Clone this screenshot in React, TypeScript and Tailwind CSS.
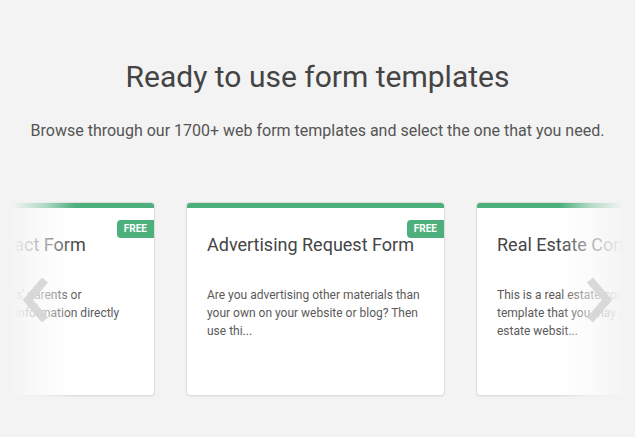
import React from "react";

const templates = [
  {
    title: "School Contact Form",
    text: "Allow your students' parents or guardians to send information directly",
    free: true,
  },
  {
    title: "Advertising Request Form",
    text: "Are you advertising other materials than your own on your website or blog? Then use thi...",
    free: true,
  },
  {
    title: "Real Estate Contact Form",
    text: "This is a real estate contact form template that you may use on your real estate websit...",
    free: false,
  },
];

const TemplateCard = ({ title, text, free }: { title: string; text: string; free: boolean }) => {
  return (
    <div className="relative flex h-[194px] w-[259px] shrink-0 flex-col overflow-hidden rounded-[4px] border border-[#dedede] bg-white shadow-[0_1px_2px_rgba(0,0,0,0.06)]">
      <div className="h-[5px] w-full bg-[#4caf7c]" />
      {free && (
        <span className="absolute right-0 top-[17px] rounded-l-[4px] bg-[#4caf7c] px-[7px] py-[2px] text-[10px] font-bold leading-[14px] text-white">
          FREE
        </span>
      )}
      <div className="px-[20px] pt-[25px]">
        <h3 className="whitespace-nowrap text-[18px] leading-[24px] text-[#454545]">{title}</h3>
        <p className="mt-[29px] text-[12px] leading-[18px] text-[#5a5a5a]">{text}</p>
      </div>
    </div>
  );
};

const Chevron = ({ dir }: { dir: "left" | "right" }) => (
  <svg width="30" height="48" viewBox="0 0 30 48" className="block">
    <path
      d={dir === "left" ? "M24 4 L7 24 L24 44" : "M6 4 L23 24 L6 44"}
      fill="none"
      stroke="#d6d6d6"
      strokeWidth="8"
      strokeLinecap="butt"
      strokeLinejoin="miter"
    />
  </svg>
);

export default function App() {
  return (
    <div
      className="h-[437px] w-full overflow-hidden bg-[#f3f3f3]"
      style={{ fontFamily: "Roboto, 'Liberation Sans', sans-serif" }}
    >
      <div className="pt-[56px] text-center">
        <h1 className="text-[30px] leading-[42px] text-[#444]">Ready to use form templates</h1>
        <p className="mt-[23px] text-[16px] leading-[20px] text-[#555]">
          Browse through our 1700+ web form templates and select the one that you need.
        </p>
      </div>

      <div className="relative mx-[12px] mt-[61px] h-[195px] overflow-hidden">
        <div className="-ml-[116px] flex gap-[31px]">
          {templates.map((t) => (
            <TemplateCard key={t.title} {...t} />
          ))}
        </div>
        <div className="pointer-events-none absolute inset-y-0 left-0 w-[64px] bg-gradient-to-r from-[#f4f4f4] via-[#f8f8f8]/60 to-transparent" />
        <div className="pointer-events-none absolute inset-y-0 right-0 w-[64px] bg-gradient-to-l from-[#f4f4f4] via-[#f8f8f8]/60 to-transparent" />
        <div className="absolute left-[9px] top-[74px] opacity-90">
          <Chevron dir="left" />
        </div>
        <div className="absolute right-[9px] top-[74px] opacity-90">
          <Chevron dir="right" />
        </div>
      </div>
    </div>
  );
}
